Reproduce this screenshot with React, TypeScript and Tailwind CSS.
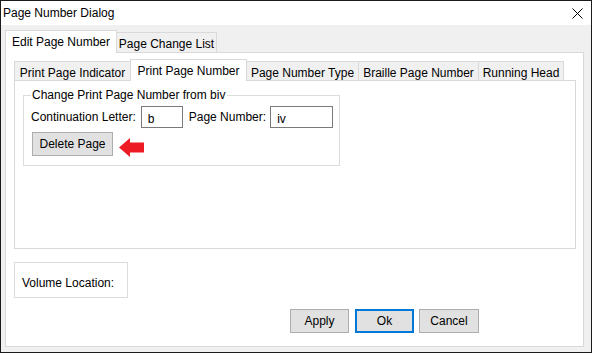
import { useState } from "react";

/**
 * PageNumberDialog - Windows style dialog with nested tab controls.
 */
const outerTabs = [
  { label: "Edit Page Number", w: "w-[112px]" },
  { label: "Page Change List", w: "w-[101px]" },
];

const innerTabs = [
  { label: "Print Page Indicator", w: "w-[117px]" },
  { label: "Print Page Number", w: "w-[117px]" },
  { label: "Page Number Type", w: "w-[113px]" },
  { label: "Braille Page Number", w: "w-[121px]" },
  { label: "Running Head", w: "w-[86px]" },
];

const CloseIcon = () => (
  <svg width="11" height="11" viewBox="0 0 11 11" className="block">
    <path d="M0.5 0.5 L10.5 10.5 M10.5 0.5 L0.5 10.5" stroke="#000" strokeWidth="1" />
  </svg>
);

const RedArrow = () => (
  <svg width="25" height="20" viewBox="0 0 25 20" className="mt-[6px] block">
    <polygon points="0,9.5 11,0 11,4.5 25,4.5 25,14.5 11,14.5 11,19" fill="#ed1c24" />
  </svg>
);

const WinButton = ({ label, w, focused = false }: { label: string; w: string; focused?: boolean }) => (
  <button
    className={`${w} h-[24px] bg-[#e1e1e1] text-black ${
      focused ? "border-2 border-[#0078d7]" : "border border-[#adadad]"
    }`}
  >
    {label}
  </button>
);

export default function App() {
  const [outer, setOuter] = useState(0);
  const [inner, setInner] = useState(1);

  return (
    <div
      className="flex h-[353px] w-[592px] flex-col border border-[#1b1b1b] bg-[#f0f0f0] text-[12px] leading-none text-black"
      style={{ fontFamily: '"Liberation Sans", Arial, sans-serif' }}
    >
      {/* title bar */}
      <div className="flex h-[24px] shrink-0 items-center justify-between bg-white pl-[2px] pr-[8px]">
        <span>Page Number Dialog</span>
        <CloseIcon />
      </div>

      <div className="pl-[4px] pt-[5px]">
        {/* outer tab strip */}
        <div className="flex h-[22px] items-end">
          {outerTabs.map((t, i) =>
            i === outer ? (
              <div
                key={t.label}
                onClick={() => setOuter(i)}
                className={`${t.w} relative z-10 -mb-px flex h-[23px] items-center justify-center border border-b-0 border-[#d9d9d9] bg-white ${i > 0 ? "-ml-px" : ""}`}
              >
                {t.label}
              </div>
            ) : (
              <div
                key={t.label}
                onClick={() => setOuter(i)}
                className={`${t.w} flex h-[20px] items-center justify-center border border-b-0 border-[#d9d9d9] bg-[#f0f0f0] pt-[2px] ${i > 0 ? "-ml-px" : ""}`}
              >
                {t.label}
              </div>
            )
          )}
        </div>

        {/* outer panel */}
        <div className="flex h-[295px] w-[579px] flex-col border border-[#d9d9d9] bg-white pl-[8px] pt-[6px]">
          {/* inner tab strip */}
          <div className="flex h-[21px] items-end">
            {innerTabs.map((t, i) =>
              i === inner ? (
                <div
                  key={t.label}
                  onClick={() => setInner(i)}
                  className={`${t.w} relative z-10 -mb-px -ml-px flex h-[22px] items-center justify-center border border-b-0 border-[#d9d9d9] bg-white`}
                >
                  {t.label}
                </div>
              ) : (
                <div
                  key={t.label}
                  onClick={() => setInner(i)}
                  className={`${t.w} flex h-[19px] items-center justify-center border border-b-0 border-[#d9d9d9] bg-[#f0f0f0] pt-[3px] ${i > 0 ? "-ml-px" : ""}`}
                >
                  {t.label}
                </div>
              )
            )}
          </div>

          {/* inner panel */}
          <div className="h-[169px] w-[562px] border border-[#d9d9d9] bg-white pl-[8px] pt-[14px]">
            <div className="flex h-[71px] w-[317px] flex-col border border-[#dcdcdc] pl-[7px]">
              <span className="-mt-[7px] w-fit bg-white pl-[1px] pr-[2px]">Change Print Page Number from biv</span>
              <div className="mt-[5px] flex items-center">
                <span>Continuation Letter:</span>
                <input
                  defaultValue="b"
                  className="ml-[5px] h-[22px] w-[42px] border border-[#7a7a7a] bg-white pl-[6px] pt-[3px] outline-none"
                />
                <span className="ml-[6px]">Page Number:</span>
                <input
                  defaultValue="iv"
                  className="ml-[4px] h-[22px] w-[63px] border border-[#7a7a7a] bg-white pl-[6px] pt-[3px] outline-none"
                />
              </div>
              <div className="mt-[4px] flex items-start gap-[6px] pl-[1px]">
                <WinButton label="Delete Page" w="w-[81px]" />
                <RedArrow />
              </div>
            </div>
          </div>

          {/* volume location */}
          <div className="mt-[13px] flex h-[36px] w-[114px] items-center border border-[#dcdcdc] pl-[7px] pt-[6px]">
            Volume Location:
          </div>

          {/* dialog buttons */}
          <div className="mt-[11px] flex pl-[276px]">
            <WinButton label="Apply" w="w-[59px]" />
            <div className="ml-[6px]">
              <WinButton label="Ok" w="w-[59px]" focused />
            </div>
            <div className="ml-[5px]">
              <WinButton label="Cancel" w="w-[60px]" />
            </div>
          </div>
        </div>
      </div>
    </div>
  );
}
